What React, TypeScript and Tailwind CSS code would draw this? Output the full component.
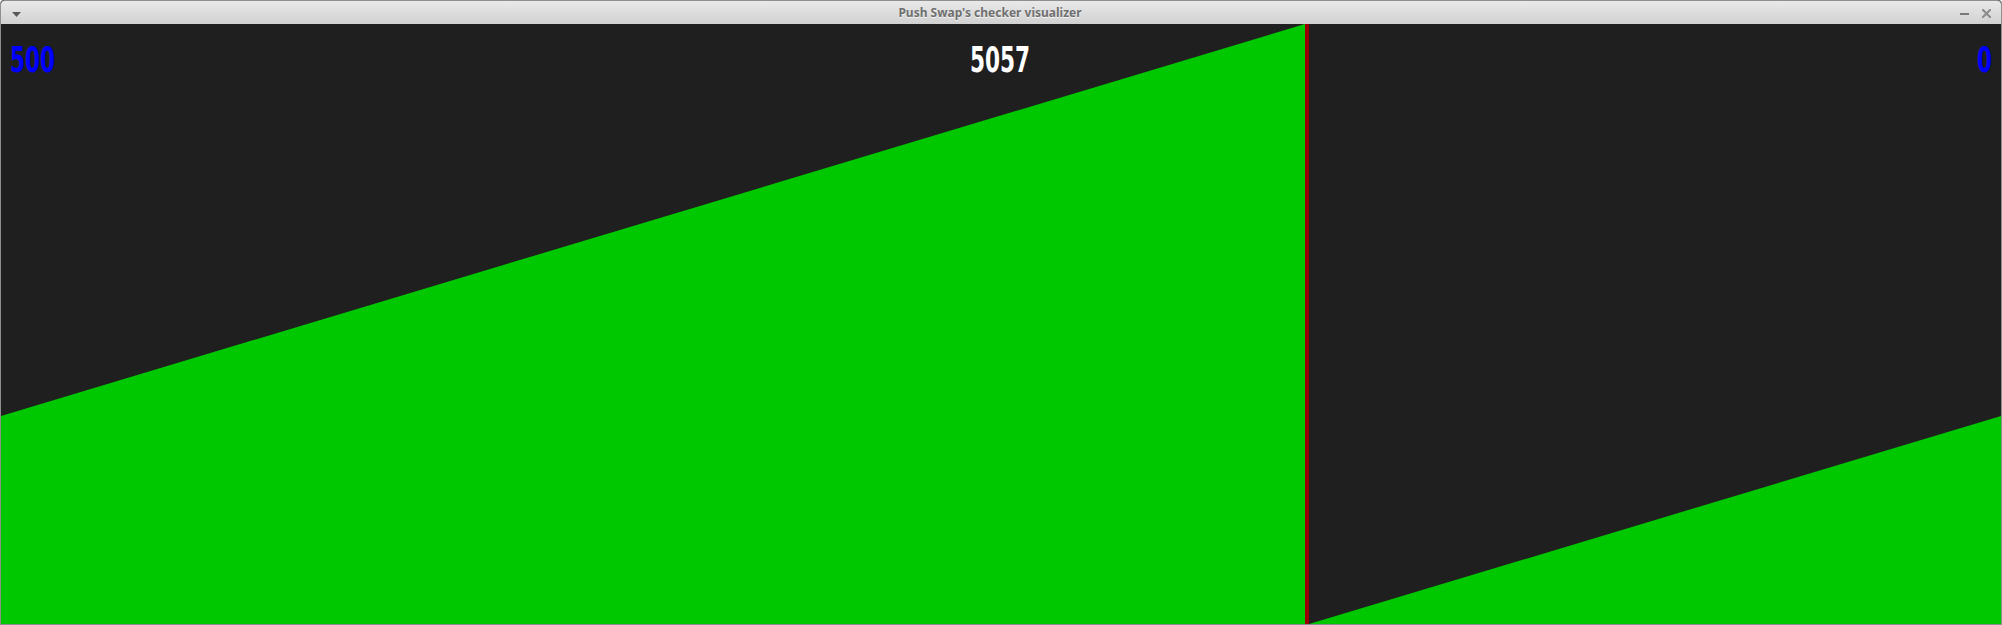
import React from "react";

// stack A: 500 values rising left to right, stack B holds the rest of the ramp
const LEFT_W = 1304;
const RIGHT_W = 692;
const H = 600;

function TitleBar() {
  return (
    <div className="relative flex h-[24px] shrink-0 items-center rounded-t-[4px] border-t border-[#8f8f8f] bg-gradient-to-b from-[#e9e9e9] to-[#d1d1d1]">
      <svg
        className="absolute left-[11px] top-[11px]"
        width="9"
        height="6"
        viewBox="0 0 9 6"
      >
        <polygon points="0,0 9,0 4.5,5" fill="#5a5a5a" />
      </svg>
      <div className="flex-1 text-center font-['Noto_Sans',sans-serif] text-[12px] font-bold leading-[22px] text-[#6f6f6f] [text-shadow:0_1px_0_#f4f4f4]">
        <span className="relative -left-[11px]">Push Swap's checker visualizer</span>
      </div>
      <div className="absolute right-[10px] top-[8px] flex items-center gap-[13px]">
        <svg width="9" height="9" viewBox="0 0 9 9">
          <rect x="0" y="4" width="9" height="2" fill="#7a7a7a" />
        </svg>
        <svg width="9" height="9" viewBox="0 0 9 9">
          <path
            d="M1 1 L8 8 M8 1 L1 8"
            stroke="#8a8a8a"
            strokeWidth="2"
            strokeLinecap="square"
          />
        </svg>
      </div>
    </div>
  );
}

function Counter({ value, color }: { value: string; color: string }) {
  return (
    <span
      className={`inline-block origin-center scale-y-[1.5] font-['DejaVu_Sans_Condensed','DejaVu_Sans',sans-serif] text-[24px] font-bold leading-[24px] ${color}`}
    >
      {value}
    </span>
  );
}

export default function App() {
  return (
    <div className="flex h-[625px] w-[2002px] flex-col overflow-hidden rounded-t-[4px] border-x border-b border-[#8f8f8f] bg-[#1f1f1f]">
      <TitleBar />
      <div className="relative flex h-[600px] shrink-0">
        <div className="h-full w-[1304px] shrink-0">
          <svg width={LEFT_W} height={H} viewBox={`0 0 ${LEFT_W} ${H}`} className="block">
            <polygon
              points={`0,392 ${LEFT_W},0 ${LEFT_W},${H} 0,${H}`}
              fill="#00c800"
            />
          </svg>
        </div>
        <div className="h-full w-[4px] shrink-0 bg-[#9a0000]" />
        <div className="h-full flex-1">
          <svg width={RIGHT_W} height={H} viewBox={`0 0 ${RIGHT_W} ${H}`} className="block">
            <polygon
              points={`0,${H} ${RIGHT_W},392 ${RIGHT_W},${H}`}
              fill="#00c800"
            />
          </svg>
        </div>

        <div className="absolute left-[9px] top-[24px]">
          <Counter value="500" color="text-[#0000ff]" />
        </div>
        <div className="absolute left-[999px] top-[24px] -translate-x-1/2">
          <Counter value="5057" color="text-white" />
        </div>
        <div className="absolute right-[9px] top-[24px]">
          <Counter value="0" color="text-[#0000ff]" />
        </div>
      </div>
    </div>
  );
}
